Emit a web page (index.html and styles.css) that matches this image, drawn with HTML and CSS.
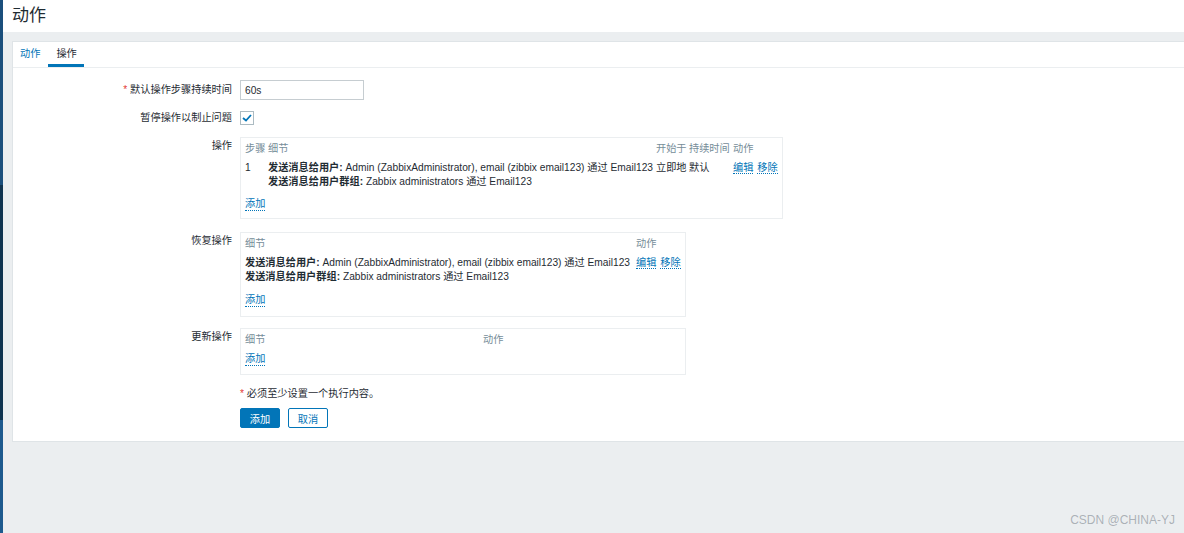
FILE: index.html
```html
<!DOCTYPE html>
<html lang="zh">
  <head>
    <meta charset="UTF-8" />
    <title>动作</title>
    <link rel="stylesheet" href="styles.css">
  </head>
  <body>
    <aside class="sidebar"></aside>
    <main class="page">
      <header class="page-header">
        <h1>动作</h1>
      </header>
      <section class="card">
        <nav class="tabs">
          <a class="tab">动作</a>
          <a class="tab tab-active">操作</a>
        </nav>
        <form class="form" autocomplete="off">
          <div class="form-row row-input">
            <label class="form-label"><span class="req">*</span> 默认操作步骤持续时间</label>
            <div class="form-field">
              <input type="text" class="text-input" value="60s" />
            </div>
          </div>
          <div class="form-row row-check">
            <label class="form-label">暂停操作以制止问题</label>
            <div class="form-field">
              <span class="checkbox">
                <svg width="10" height="8" viewBox="0 0 10 8"><path d="M1 4 L4 6.5 L9 1" fill="none" stroke="#0275b8" stroke-width="1.8"/></svg>
              </span>
            </div>
          </div>
          <div class="form-row row-box">
            <label class="form-label">操作</label>
            <div class="form-field">
              <div class="op-box box-wide">
                <table class="op-table">
                  <thead>
                    <tr>
                      <th class="c-step">步骤</th>
                      <th class="c-detail">细节</th>
                      <th class="c-start">开始于</th>
                      <th class="c-dur">持续时间</th>
                      <th>动作</th>
                    </tr>
                  </thead>
                  <tbody>
                    <tr>
                      <td>1</td>
                      <td><b>发送消息给用户:</b> Admin (ZabbixAdministrator), email (zibbix email123) 通过 Email123<br><b>发送消息给用户群组:</b> Zabbix administrators 通过 Email123</td>
                      <td>立即地</td>
                      <td>默认</td>
                      <td class="actions"><a class="link">编辑</a> <a class="link">移除</a></td>
                    </tr>
                  </tbody>
                </table>
                <a class="link add-link">添加</a>
              </div>
            </div>
          </div>
          <div class="form-row row-box row-recovery">
            <label class="form-label">恢复操作</label>
            <div class="form-field">
              <div class="op-box box-mid box-recovery">
                <table class="op-table">
                  <thead>
                    <tr>
                      <th class="c-detail2">细节</th>
                      <th>动作</th>
                    </tr>
                  </thead>
                  <tbody>
                    <tr>
                      <td><b>发送消息给用户:</b> Admin (ZabbixAdministrator), email (zibbix email123) 通过 Email123<br><b>发送消息给用户群组:</b> Zabbix administrators 通过 Email123</td>
                      <td class="actions"><a class="link">编辑</a> <a class="link">移除</a></td>
                    </tr>
                  </tbody>
                </table>
                <a class="link add-link">添加</a>
              </div>
            </div>
          </div>
          <div class="form-row row-box row-update">
            <label class="form-label">更新操作</label>
            <div class="form-field">
              <div class="op-box box-mid box-update">
                <table class="op-table">
                  <thead>
                    <tr>
                      <th class="c-detail3">细节</th>
                      <th>动作</th>
                    </tr>
                  </thead>
                </table>
                <a class="link add-link add-empty">添加</a>
              </div>
            </div>
          </div>
          <div class="form-row row-note">
            <span></span>
            <div class="form-field note"><span class="req">*</span> 必须至少设置一个执行内容。</div>
          </div>
          <div class="form-row row-buttons">
            <span></span>
            <div class="form-field buttons">
              <button type="button" class="btn btn-primary">添加</button>
              <button type="button" class="btn btn-alt">取消</button>
            </div>
          </div>
        </form>
      </section>
    </main>
    <div class="watermark">CSDN @CHINA-YJ</div>
  </body>
</html>
```

FILE: styles.css
```css
html, body {
  margin: 0;
  height: 100%;
}
body {
  display: flex;
  background: #ebeef0;
  font-family: "Liberation Sans", Arial, "Noto Sans CJK SC", sans-serif;
  font-size: 10.2px;
  color: #1f2c33;
  overflow: hidden;
}
.sidebar {
  width: 3px;
  flex-shrink: 0;
  background: linear-gradient(#1b4f7c 0, #1b4f7c 185px, #0f3450 185px, #0f3450 420px, #1d5a8e 420px);
}
.page {
  flex: 1;
  min-width: 0;
}
.page-header {
  height: 32px;
  background: #fff;
  display: flex;
  align-items: center;
  padding-left: 9px;
}
.page-header h1 {
  margin: 0;
  font-size: 17px;
  font-weight: 400;
  color: #1f2c33;
  line-height: 20px;
}
.card {
  margin: 9px 0 0 9px;
  background: #fff;
  border: 1px solid #dfe4e7;
  border-right: none;
  padding-bottom: 13px;
}
.tabs {
  display: flex;
  height: 25px;
  border-bottom: 1px solid #ebeef0;
}
.tab {
  padding: 0 8px 0 7px;
  line-height: 24px;
  color: #0275b8;
  cursor: pointer;
}
.tab + .tab {
  padding: 0 7px 0 8px;
}
.tab-active {
  color: #1f2c33;
  border-bottom: 3px solid #0275b8;
  height: 22px;
}
.form {
  padding-top: 12px;
  display: flex;
  flex-direction: column;
}
.form-row {
  display: grid;
  grid-template-columns: 219px 1fr;
  column-gap: 8px;
}
.form-label {
  text-align: right;
  line-height: 20px;
}
.req {
  color: #e33734;
}
.text-input {
  width: 124px;
  height: 20px;
  box-sizing: border-box;
  border: 1px solid #c6cdd1;
  padding: 0 4px;
  font: inherit;
  color: #1f2c33;
  display: block;
}
.row-check {
  margin-top: 9px;
}
.row-check .form-label {
  line-height: 18px;
}
.checkbox {
  display: flex;
  align-items: center;
  justify-content: center;
  width: 12px;
  height: 12px;
  border: 1px solid #acbbc2;
  margin-top: 2px;
}
.row-box {
  margin-top: 10px;
}
.row-recovery {
  margin-top: 13px;
}
.row-update {
  margin-top: 11px;
}
.row-box .form-label {
  line-height: 14px;
  padding-top: 2px;
}
.op-box {
  border: 1px solid #ebeef0;
  padding: 3px 4px 7px 4px;
  box-sizing: border-box;
}
.box-recovery {
  padding-bottom: 9px;
}
.box-update {
  padding-bottom: 8px;
}
.box-wide {
  width: 543px;
}
.box-mid {
  width: 446px;
}
.op-table {
  border-collapse: collapse;
  table-layout: fixed;
  width: 100%;
}
.op-table th {
  text-align: left;
  font-weight: 400;
  color: #768d99;
  line-height: 15px;
  padding: 0;
  white-space: nowrap;
}
.op-table td {
  vertical-align: top;
  line-height: 14px;
  padding: 5px 0 0 0;
  white-space: nowrap;
}
.c-step { width: 23px; }
.c-detail { width: 388px; }
.c-start { width: 33px; }
.c-dur { width: 44px; }
.c-detail2 { width: 391px; }
.c-detail3 { width: 238px; }
.link {
  color: #0275b8;
  border-bottom: 1px dotted #0275b8;
  cursor: pointer;
}
.actions .link + .link {
  margin-left: 1px;
}
.add-link {
  display: inline-block;
  margin-top: 8px;
  line-height: 13px;
}
.box-recovery .add-link {
  margin-top: 9px;
}
.add-empty {
  margin-top: 5px;
}
.row-note {
  margin-top: 12px;
}
.note {
  line-height: 14px;
}
.row-buttons {
  margin-top: 7px;
}
.buttons {
  display: flex;
  gap: 8px;
}
.btn {
  height: 20px;
  width: 40px;
  padding: 0;
  font: inherit;
  border-radius: 2px;
  cursor: pointer;
}
.btn-primary {
  background: #0275b8;
  border: 1px solid #0275b8;
  color: #fff;
}
.btn-alt {
  background: #fff;
  border: 1px solid #0275b8;
  color: #0275b8;
}
.watermark {
  position: absolute;
  right: 9px;
  bottom: 6px;
  font-size: 12px;
  color: rgba(90, 100, 110, 0.45);
}
```
